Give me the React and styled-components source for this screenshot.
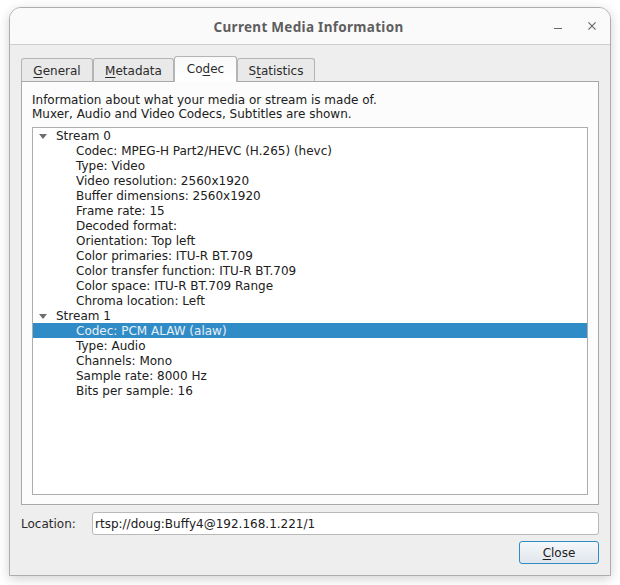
import React from "react";
import styled, { createGlobalStyle } from "styled-components";

const Global = createGlobalStyle`
  html, body { margin: 0; padding: 0; background: #ffffff; }
  body { width: 620px; height: 585px; overflow: hidden; font-family: "DejaVu Sans", sans-serif; }
`;

const Stage = styled.div`
  width: 620px;
  height: 585px;
  box-sizing: border-box;
  padding: 7px 9px 9px 9px;
`;

const Window = styled.div`
  width: 602px;
  height: 569px;
  box-sizing: border-box;
  display: flex;
  flex-direction: column;
  background: #eeeeee;
  border: 1px solid #adadad;
  border-radius: 12px 12px 0 0;
  box-shadow: 0 3px 12px rgba(0, 0, 0, 0.18);
  overflow: hidden;
`;

const TitleBar = styled.div`
  height: 36px;
  flex: none;
  display: flex;
  align-items: center;
  justify-content: center;
  position: relative;
  background: #fafafa;
  border-bottom: 1px solid #cfcfcf;
`;

const Title = styled.div`
  font-family: "Noto Sans", sans-serif;
  font-weight: 700;
  font-size: 13.5px;
  color: #5e5e5e;
  letter-spacing: 0.3px;
  padding: 2px 3px 0 0;
`;

const WinButtons = styled.div`
  position: absolute;
  right: 14px;
  top: 14px;
  display: flex;
  gap: 26px;
  align-items: center;
`;

const Body = styled.div`
  flex: 1;
  display: flex;
  flex-direction: column;
  padding: 13px 11px 0 11px;
`;

const Tabs = styled.div`
  display: flex;
  align-items: flex-end;
  height: 24px;
  margin-bottom: -1px;
  position: relative;
  z-index: 1;
`;

const Tab = styled.div`
  box-sizing: border-box;
  width: ${(p) => p.$w}px;
  height: ${(p) => (p.$active ? 26 : 24)}px;
  display: flex;
  align-items: center;
  justify-content: center;
  font-size: 12px;
  color: #2b2b2b;
  padding: ${(p) => (p.$active ? "0 0 2px" : "2px 0 0")};
  background: ${(p) => (p.$active ? "linear-gradient(#f9f9f9, #ffffff)" : "#e9e9e9")};
  border: 1px solid #b4b4b4;
  border-bottom: ${(p) => (p.$active ? "none" : "1px solid #a8a8a8")};
  border-radius: 3px 3px 0 0;
`;

const Key = styled.span`
  text-decoration: underline;
  text-underline-offset: 2px;
`;

const Panel = styled.div`
  box-sizing: border-box;
  width: 578px;
  height: 424px;
  display: flex;
  flex-direction: column;
  padding: 11px 10px 9px 10px;
  background: #fcfcfc;
  border: 1px solid #a8a8a8;
`;

const Info = styled.div`
  font-size: 12px;
  line-height: 14px;
  color: #202020;
  height: 31px;
  flex: none;
  margin-bottom: 3px;
  white-space: nowrap;
`;

const Tree = styled.div`
  flex: 1;
  box-sizing: border-box;
  background: #ffffff;
  border: 1px solid #adadad;
  width: 556px;
`;

const Row = styled.div`
  box-sizing: border-box;
  height: 15px;
  line-height: 13px;
  padding-top: 2px;
  font-size: 12px;
  white-space: nowrap;
  display: flex;
  align-items: center;
  color: ${(p) => (p.$selected ? "#e6eff7" : "#202020")};
  background: ${(p) => (p.$selected ? "#308cc6" : "transparent")};
  padding-left: ${(p) => (p.$child ? 43 : 6)}px;
`;

const Caret = styled.span`
  width: 0;
  height: 0;
  margin-right: 9px;
  border-left: 4px solid transparent;
  border-right: 4px solid transparent;
  border-top: 5px solid #6e6e6e;
  flex: none;
`;

const LocationRow = styled.div`
  display: flex;
  align-items: center;
  margin-top: 7px;
  height: 23px;
`;

const LocationLabel = styled.div`
  width: 71px;
  flex: none;
  font-size: 12px;
  color: #2b2b2b;
`;

const LocationInput = styled.div`
  box-sizing: border-box;
  width: 507px;
  height: 23px;
  display: flex;
  align-items: center;
  padding-left: 2px;
  font-size: 12px;
  color: #202020;
  background: #ffffff;
  border: 1px solid #b9b9b9;
  border-radius: 3px;
`;

const Footer = styled.div`
  display: flex;
  justify-content: flex-end;
  margin-top: 6px;
`;

const CloseButton = styled.div`
  box-sizing: border-box;
  width: 80px;
  height: 23px;
  display: flex;
  align-items: center;
  justify-content: center;
  font-size: 12px;
  color: #202020;
  background: linear-gradient(#f6f8fa, #dfe6ec);
  border: 1px solid #308cc6;
  border-radius: 3px;
`;

const stream0 = [
  "Codec: MPEG-H Part2/HEVC (H.265) (hevc)",
  "Type: Video",
  "Video resolution: 2560x1920",
  "Buffer dimensions: 2560x1920",
  "Frame rate: 15",
  "Decoded format:",
  "Orientation: Top left",
  "Color primaries: ITU-R BT.709",
  "Color transfer function: ITU-R BT.709",
  "Color space: ITU-R BT.709 Range",
  "Chroma location: Left",
];

const stream1 = [
  "Codec: PCM ALAW (alaw)",
  "Type: Audio",
  "Channels: Mono",
  "Sample rate: 8000 Hz",
  "Bits per sample: 16",
];

export default function App() {
  return (
    <Stage>
      <Global />
      <Window>
        <TitleBar>
          <Title>Current Media Information</Title>
          <WinButtons>
            <svg width="8" height="8" viewBox="0 0 8 8">
              <path d="M0 6.5H8" stroke="#6a6a6a" strokeWidth="1" />
            </svg>
            <svg width="8" height="8" viewBox="0 0 8 8">
              <path d="M0.4 0.4L7.6 7.6M7.6 0.4L0.4 7.6" stroke="#6a6a6a" strokeWidth="1.2" />
            </svg>
          </WinButtons>
        </TitleBar>
        <Body>
          <Tabs>
            <Tab $w={72}><span><Key>G</Key>eneral</span></Tab>
            <Tab $w={81}><span><Key>M</Key>etadata</span></Tab>
            <Tab $w={63} $active><span>Co<Key>d</Key>ec</span></Tab>
            <Tab $w={78}><span>S<Key>t</Key>atistics</span></Tab>
          </Tabs>
          <Panel>
            <Info>
              Information about what your media or stream is made of.
              <br />
              Muxer, Audio and Video Codecs, Subtitles are shown.
            </Info>
            <Tree>
              <Row><Caret />Stream 0</Row>
              {stream0.map((t) => <Row key={t} $child>{t}</Row>)}
              <Row><Caret />Stream 1</Row>
              {stream1.map((t, i) => <Row key={t} $child $selected={i === 0}>{t}</Row>)}
            </Tree>
          </Panel>
          <LocationRow>
            <LocationLabel>Location:</LocationLabel>
            <LocationInput>rtsp://doug:Buffy4@192.168.1.221/1</LocationInput>
          </LocationRow>
          <Footer>
            <CloseButton><span><Key>C</Key>lose</span></CloseButton>
          </Footer>
        </Body>
      </Window>
    </Stage>
  );
}
